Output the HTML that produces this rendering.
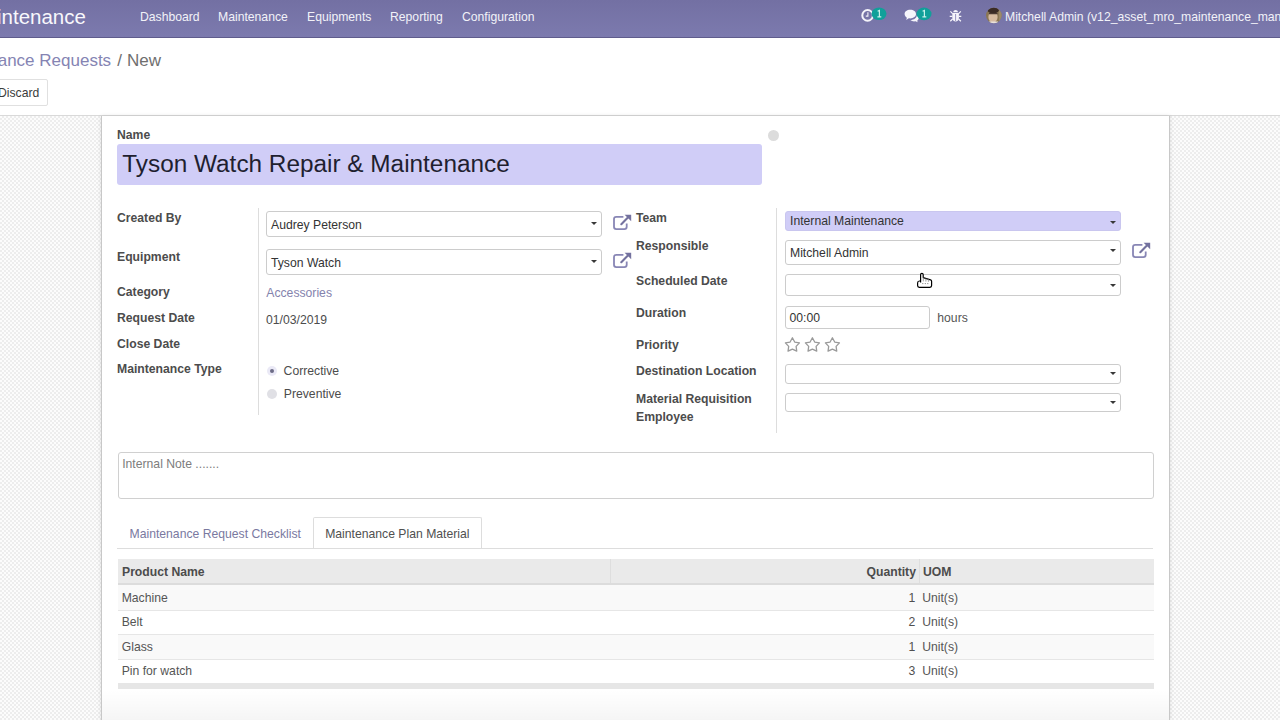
<!DOCTYPE html>
<html><head><meta charset="utf-8">
<style>
*{box-sizing:border-box;margin:0;padding:0}
html,body{width:1280px;height:720px;overflow:hidden;background:#fff;font-family:"Liberation Sans",sans-serif;font-size:12.2px;color:#4c4c4c}
.a{position:absolute;white-space:nowrap}
#nav{position:absolute;left:0;top:0;width:1280px;height:38px;background:linear-gradient(#7370a3,#7c7aae);border-bottom:1px solid #5f5c8c}
#nav .m{position:absolute;white-space:nowrap;top:10px;font-size:12.2px;color:#f2f2f8}
#cp{position:absolute;left:0;top:38px;width:1280px;height:78px;background:#fff;border-bottom:1px solid #d9d9d9}
#bg{position:absolute;left:0;top:116px;width:1280px;height:604px;
 background-color:#f4f4f4;
 background-image:repeating-conic-gradient(#ededed 0 25%, #fcfcfc 0 50%);background-size:4px 4px}
#sheet{position:absolute;left:101px;top:116px;width:1069px;height:610px;background:#fff;border-left:1px solid #c8c8c8;border-right:1px solid #c8c8c8;box-shadow:0 0 4px rgba(0,0,0,.12)}
.lbl{position:absolute;font-weight:bold;font-size:12.2px;color:#4c4c4c;white-space:nowrap}
.inp{position:absolute;border:1px solid #ccc;border-radius:3px;background:#fff;font-size:12.2px;color:#333;white-space:nowrap}
.inp span{position:absolute;left:5px}
.caret{position:absolute;width:0;height:0;border-left:3.3px solid transparent;border-right:3.3px solid transparent;border-top:3.6px solid #383838}
.ext{position:absolute}
.vl{position:absolute;width:1px;background:#ddd}
.cell{position:absolute;font-size:12px;color:#4c4c4c;white-space:nowrap}
</style></head><body>
<div id="nav">
  <div class="a" style="left:-3px;top:4.6px;font-size:20.5px;color:#f8f8fc">intenance</div>
  <div class="m" style="left:140px">Dashboard</div>
  <div class="m" style="left:218px">Maintenance</div>
  <div class="m" style="left:307px">Equipments</div>
  <div class="m" style="left:390px">Reporting</div>
  <div class="m" style="left:462px">Configuration</div>

  <svg class="a" style="left:855px;top:0;overflow:visible" width="90" height="30" viewBox="855 0 90 30">
    <circle cx="867.6" cy="15.4" r="5.3" fill="none" stroke="#f4f3fa" stroke-width="2"/>
    <path d="M867.9 12.3 V16.1 H865.8" fill="none" stroke="#f4f3fa" stroke-width="1.1"/>
    <ellipse cx="879" cy="13.8" rx="7.5" ry="6.3" fill="#11a09a"/>
    <path d="M877.6 11.2 L879.4 10.4 V16.6 M877.4 16.8 H881.3" fill="none" stroke="#c8f2ec" stroke-width="1.2"/>
    <path d="M910.2 9.8 C913.6 9.8 916 11.6 916 14.1 C916 16.6 913.6 18.4 910.2 18.4 C909.7 18.4 909.2 18.4 908.8 18.3 L906.2 20 L906.9 17.7 C905.5 16.9 904.6 15.6 904.6 14.1 C904.6 11.6 907 9.8 910.2 9.8 Z" fill="#f6f5fb"/>
    <path d="M916.8 15.2 C918 16 918.7 17 918.7 18.1 C918.7 19.2 918.1 20.1 917.1 20.8 L917.7 22.2 L915.5 21.3 C915.1 21.4 914.6 21.4 914.2 21.4 C912.6 21.4 911.3 20.9 910.4 20 C914.2 19.8 916.9 17.8 916.8 15.2 Z" fill="#f6f5fb"/>
    <ellipse cx="924" cy="13.9" rx="7.5" ry="6.3" fill="#11a09a"/>
    <path d="M922.6 11.2 L924.4 10.4 V16.6 M922.4 16.8 H926.3" fill="none" stroke="#c8f2ec" stroke-width="1.2"/>
    <path d="M953.2 12.3 C953.4 10.9 954.4 10.1 955.6 10.1 C956.8 10.1 957.8 10.9 958 12.3 Z" fill="#f6f5fb"/>
    <path d="M952.3 13 H958.9 V18 C958.9 20.2 957.4 21.6 955.6 21.6 C953.8 21.6 952.3 20.2 952.3 18 Z" fill="#f6f5fb"/>
    <path d="M955.6 14 V21" stroke="#8a88b8" stroke-width="0.9"/>
    <path d="M950.4 11.3 L952.6 13.6 M960.8 11.3 L958.6 13.6 M949.7 16.3 H952.4 M961.3 16.3 H958.8 M950.3 21.2 L952.6 19 M960.9 21.2 L958.6 19" stroke="#f6f5fb" stroke-width="1.2"/>
  </svg>
  <svg class="a" style="left:985px;top:7px" width="18" height="18" viewBox="985 7 18 18"><defs><clipPath id="av"><circle cx="993.8" cy="15.5" r="7.8"/></clipPath></defs><g clip-path="url(#av)"><rect x="985" y="7" width="18" height="18" fill="#8a7654"/><rect x="999" y="7" width="4" height="18" fill="#9c8a68"/><ellipse cx="993" cy="17" rx="4.6" ry="5.6" fill="#d6bba0"/><ellipse cx="993.2" cy="10.2" rx="5.6" ry="3.2" fill="#3a2b25"/><path d="M989 13.6 H997.5" stroke="#4a3a32" stroke-width="1.1"/><rect x="989" y="21.5" width="9" height="3" fill="#e8e2dc"/></g></svg>
  <div class="m" style="left:1005px">Mitchell Admin (v12_asset_mro_maintenance_man</div>
</div>
<div id="cp">
  <div class="a" style="left:-2.3px;top:12.6px;font-size:17px;color:#8584b3">ance Requests</div>
  <div class="a" style="left:117.2px;top:12.6px;font-size:17px;color:#6f6f6f">/</div>
  <div class="a" style="left:127px;top:12.6px;font-size:17px;color:#6f6f6f">New</div>
  <div class="a" style="left:-10px;top:40.5px;width:58px;height:27.5px;border:1px solid #e0e0e0;border-radius:2px;background:#fff"></div>
  <div class="a" style="left:-2px;top:47.7px;font-size:12.2px;color:#3c3c3c">Discard</div>
</div>
<div id="bg"></div>
<div id="sheet"></div>
<div class="a" style="left:102px;top:690px;width:1067px;height:30px;background:linear-gradient(rgba(0,0,0,0),rgba(0,0,0,0.04))"></div>
<div id="form">
  <div class="lbl" style="left:117px;top:128px">Name</div>
  <div class="a" style="left:117px;top:143.5px;width:645px;height:41.5px;background:#d0cdf7;border-radius:3px"></div>
  <div class="a" style="left:122.3px;top:150.4px;font-size:24.35px;color:#1f1f30">Tyson Watch Repair &amp; Maintenance</div>
  <div class="a" style="left:767.5px;top:130px;width:11px;height:11px;border-radius:50%;background:#dcdcdc"></div>

  <div class="vl" style="left:258px;top:208px;height:207px"></div>
  <div class="vl" style="left:776px;top:208px;height:225px"></div>

  <div class="lbl" style="left:117px;top:211px">Created By</div>
  <div class="lbl" style="left:117px;top:250px">Equipment</div>
  <div class="lbl" style="left:117px;top:284.5px">Category</div>
  <div class="lbl" style="left:117px;top:311px">Request Date</div>
  <div class="lbl" style="left:117px;top:337px">Close Date</div>
  <div class="lbl" style="left:117px;top:362px">Maintenance Type</div>

  <div class="inp" style="left:266px;top:211px;width:336px;height:26px"></div>
  <div class="a" style="left:271px;top:218px;color:#333">Audrey Peterson</div>
  <div class="caret" style="left:591.3px;top:222px"></div>
  <div class="inp" style="left:266px;top:249px;width:336px;height:26px"></div>
  <div class="a" style="left:271px;top:256px;color:#333">Tyson Watch</div>
  <div class="caret" style="left:591.3px;top:260px"></div>
  <div class="a" style="left:266.3px;top:286px;color:#8483ad">Accessories</div>
  <div class="a" style="left:266px;top:312.5px;color:#4c4c4c">01/03/2019</div>
  <div class="a" style="left:266.8px;top:365.9px;width:10.4px;height:10.4px;border-radius:50%;background:#eae9f6"></div>
  <div class="a" style="left:269.9px;top:368.9px;width:4.2px;height:4.2px;border-radius:50%;background:#6c6b86"></div>
  <div class="a" style="left:283.6px;top:364px;color:#4c4c4c">Corrective</div>
  <div class="a" style="left:266.8px;top:388.6px;width:10.4px;height:10.4px;border-radius:50%;background:#e0e0e5"></div>
  <div class="a" style="left:283.8px;top:387px;color:#4c4c4c">Preventive</div>

  <div class="lbl" style="left:636px;top:211px">Team</div>
  <div class="lbl" style="left:636px;top:239px">Responsible</div>
  <div class="lbl" style="left:636px;top:274px">Scheduled Date</div>
  <div class="lbl" style="left:636px;top:306px">Duration</div>
  <div class="lbl" style="left:636px;top:338px">Priority</div>
  <div class="lbl" style="left:636px;top:364px">Destination Location</div>
  <div class="lbl" style="left:636px;line-height:18px;top:389.5px">Material Requisition<br>Employee</div>

  <div class="a" style="left:785px;top:211px;width:335.5px;height:19.5px;background:#d0cdf7;border:1px solid #c9c6ef;border-radius:3px"></div>
  <div class="a" style="left:790px;top:214px;color:#333">Internal Maintenance</div>
  <div class="caret" style="left:1110px;top:221px"></div>
  <div class="inp" style="left:785px;top:239.5px;width:335.5px;height:25px"></div>
  <div class="a" style="left:790px;top:246px;color:#333">Mitchell Admin</div>
  <div class="caret" style="left:1110px;top:249px"></div>
  <div class="inp" style="left:785px;top:274.3px;width:335.5px;height:21.7px"></div>
  <div class="caret" style="left:1110px;top:284px"></div>
  <div class="inp" style="left:785px;top:306px;width:145px;height:22.5px"></div>
  <div class="a" style="left:789.5px;top:310.5px;color:#333">00:00</div>
  <div class="a" style="left:937.3px;top:310.5px;color:#555">hours</div>
  <div class="inp" style="left:785px;top:364px;width:335.5px;height:19.5px"></div>
  <div class="caret" style="left:1110px;top:372px"></div>
  <div class="inp" style="left:785px;top:392.5px;width:335.5px;height:19px"></div>
  <div class="caret" style="left:1110px;top:401px"></div>

  <div class="a" style="left:117.5px;top:452px;width:1036px;height:46.5px;border:1px solid #d0d0d0;border-radius:3px"></div>
  <div class="a" style="left:122.2px;top:457.4px;color:#7d7d7d">Internal Note .......</div>

  <div class="a" style="left:117px;top:547.5px;width:1036px;height:1px;background:#ddd"></div>
  <div class="a" style="left:129.5px;top:526.8px;color:#7a799f">Maintenance Request Checklist</div>
  <div class="a" style="left:312.8px;top:517.2px;width:169.2px;height:31.3px;background:#fff;border:1px solid #ddd;border-bottom:none;border-radius:2px 2px 0 0"></div>
  <div class="a" style="left:325.2px;top:526.5px;color:#505050">Maintenance Plan Material</div>

  <div class="a" style="left:117.5px;top:559px;width:1036px;height:26px;background:#eaeaea;border-bottom:2px solid #dcdcdc"></div>
  <div class="a" style="left:609.5px;top:559px;width:1px;height:24px;background:#dedede"></div>
  <div class="a" style="left:918.5px;top:559px;width:1px;height:24px;background:#dedede"></div>
  <div class="lbl" style="left:122px;top:564.5px">Product Name</div>
  <div class="lbl" style="left:866.5px;top:564.5px">Quantity</div>
  <div class="lbl" style="left:923px;top:564.5px">UOM</div>

  <div class="a" style="left:117.5px;top:585px;width:1036px;height:24.5px;background:#f9f9f9"></div>
  <div class="a" style="left:117.5px;top:634px;width:1036px;height:24.5px;background:#f9f9f9"></div>
  <div class="a" style="left:117.5px;top:609.5px;width:1036px;height:1px;background:#e6e6e6"></div>
  <div class="a" style="left:117.5px;top:634px;width:1036px;height:1px;background:#e6e6e6"></div>
  <div class="a" style="left:117.5px;top:658.5px;width:1036px;height:1px;background:#e6e6e6"></div>
  <div class="a" style="left:117.5px;top:682.5px;width:1036px;height:6px;background:#e6e6e6"></div>

  <div class="a" style="left:121.7px;top:590.5px;color:#555">Machine</div>
  <div class="a" style="left:121.7px;top:615px;color:#555">Belt</div>
  <div class="a" style="left:121.7px;top:639.5px;color:#555">Glass</div>
  <div class="a" style="left:121.7px;top:664px;color:#555">Pin for watch</div>
  <div class="a" style="left:905.3px;width:10px;text-align:right;top:590.5px;color:#505050">1</div>
  <div class="a" style="left:905.3px;width:10px;text-align:right;top:615px;color:#505050">2</div>
  <div class="a" style="left:905.3px;width:10px;text-align:right;top:639.5px;color:#505050">1</div>
  <div class="a" style="left:905.3px;width:10px;text-align:right;top:664px;color:#505050">3</div>
  <div class="a" style="left:922.2px;top:590.5px;color:#555">Unit(s)</div>
  <div class="a" style="left:922.2px;top:615px;color:#555">Unit(s)</div>
  <div class="a" style="left:922.2px;top:639.5px;color:#555">Unit(s)</div>
  <div class="a" style="left:922.2px;top:664px;color:#555">Unit(s)</div>

  <svg class="a" style="left:0;top:0" width="1280" height="720" viewBox="0 0 1280 720"><polygon points="792.40,337.80 794.69,342.04 799.44,342.91 796.11,346.41 796.75,351.19 792.40,349.10 788.05,351.19 788.69,346.41 785.36,342.91 790.11,342.04" fill="none" stroke="#9a9a9a" stroke-width="1.3" stroke-linejoin="round"/><polygon points="812.40,337.80 814.69,342.04 819.44,342.91 816.11,346.41 816.75,351.19 812.40,349.10 808.05,351.19 808.69,346.41 805.36,342.91 810.11,342.04" fill="none" stroke="#9a9a9a" stroke-width="1.3" stroke-linejoin="round"/><polygon points="832.40,337.80 834.69,342.04 839.44,342.91 836.11,346.41 836.75,351.19 832.40,349.10 828.05,351.19 828.69,346.41 825.36,342.91 830.11,342.04" fill="none" stroke="#9a9a9a" stroke-width="1.3" stroke-linejoin="round"/></svg>
  <svg class="a" style="left:608px;top:208px" width="30" height="28" viewBox="0 0 30 28"><path d="M15.4 8.8 H8.3 Q6 8.8 6 11.1 V18.8 Q6 21.1 8.3 21.1 H16.4 Q18.7 21.1 18.7 18.8 V15.4" fill="none" stroke="#8886b5" stroke-width="1.8"/><polygon points="16.6,6.7 23.2,6.7 23.2,13.3" fill="#74729f"/><path d="M13.3 16.2 L20.4 9.1" stroke="#74729f" stroke-width="2.1" stroke-linecap="round"/></svg>
  <svg class="a" style="left:608px;top:246px" width="30" height="28" viewBox="0 0 30 28"><path d="M15.4 8.8 H8.3 Q6 8.8 6 11.1 V18.8 Q6 21.1 8.3 21.1 H16.4 Q18.7 21.1 18.7 18.8 V15.4" fill="none" stroke="#8886b5" stroke-width="1.8"/><polygon points="16.6,6.7 23.2,6.7 23.2,13.3" fill="#74729f"/><path d="M13.3 16.2 L20.4 9.1" stroke="#74729f" stroke-width="2.1" stroke-linecap="round"/></svg>
  <svg class="a" style="left:1127px;top:236px" width="30" height="28" viewBox="0 0 30 28"><path d="M15.4 8.8 H8.3 Q6 8.8 6 11.1 V18.8 Q6 21.1 8.3 21.1 H16.4 Q18.7 21.1 18.7 18.8 V15.4" fill="none" stroke="#8886b5" stroke-width="1.8"/><polygon points="16.6,6.7 23.2,6.7 23.2,13.3" fill="#74729f"/><path d="M13.3 16.2 L20.4 9.1" stroke="#74729f" stroke-width="2.1" stroke-linecap="round"/></svg>
  <svg class="a" style="left:905px;top:265px" width="40" height="30" viewBox="0 0 40 30">
    <path d="M15.6 17.5 V9.8 Q15.6 8.3 16.9 8.3 Q18.2 8.3 18.2 9.8 V12.6 L25.6 14.8 Q26.6 15.1 26.6 16.3 V20.6 Q26.6 22.3 24.9 22.3 H14.2 Q12.6 22.3 12.6 20.6 V17.9 Q12.6 16 14.4 16 H15.6" fill="#fff" stroke="#000" stroke-width="1.2" stroke-linejoin="round"/>
    <path d="M17.3 18.6 H18.3 M19.8 18.6 H20.8 M22.3 18.6 H23.3" stroke="#555" stroke-width="0.8"/><path d="M18.3 12.6 V16.4 M20.9 13.4 V16.6 M23.4 14.2 V16.8" stroke="#888" stroke-width="0.8"/>
  </svg>
</div>
</body></html>
